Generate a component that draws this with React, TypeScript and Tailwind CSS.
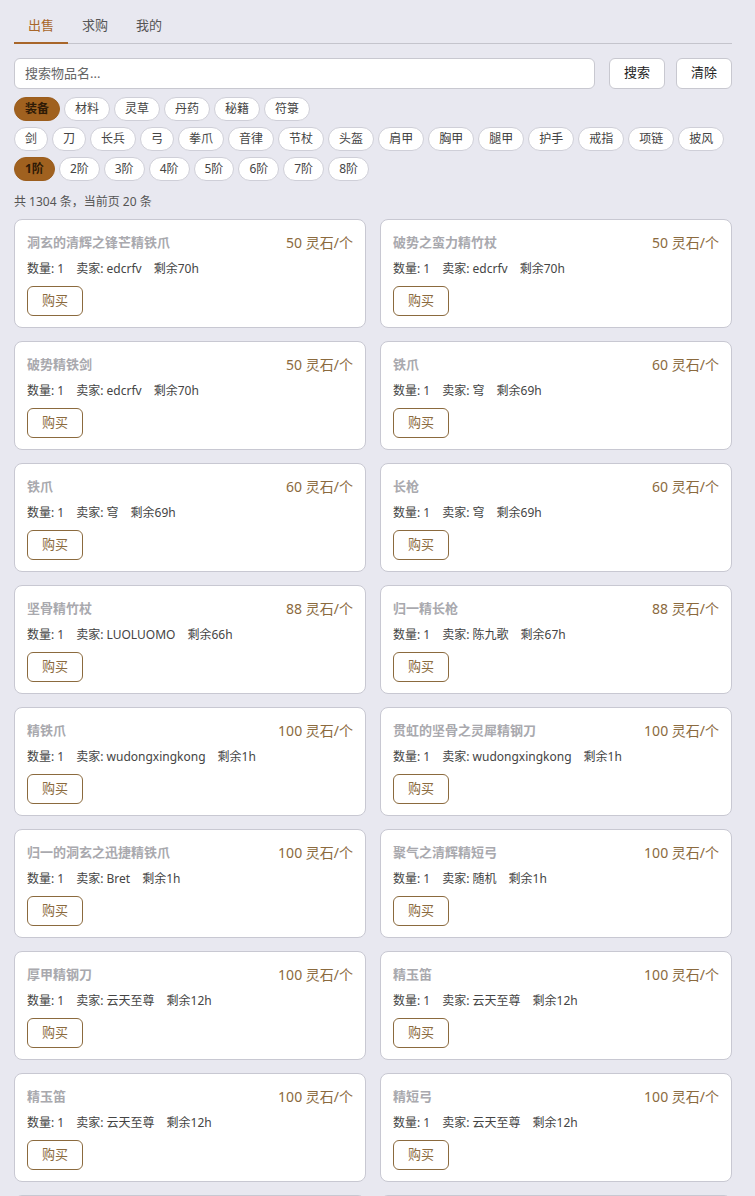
import { useState } from 'react';

const tabs = ['出售', '求购', '我的'];
const kinds = ['装备', '材料', '灵草', '丹药', '秘籍', '符箓'];
const slots = ['剑', '刀', '长兵', '弓', '拳爪', '音律', '节杖', '头盔', '肩甲', '胸甲', '腿甲', '护手', '戒指', '项链', '披风'];
const tiers = ['1阶', '2阶', '3阶', '4阶', '5阶', '6阶', '7阶', '8阶'];

const listings = [
  ['洞玄的清辉之锋芒精铁爪', 50, 'edcrfv', '70h'],
  ['破势之蛮力精竹杖', 50, 'edcrfv', '70h'],
  ['破势精铁剑', 50, 'edcrfv', '70h'],
  ['铁爪', 60, '穹', '69h'],
  ['铁爪', 60, '穹', '69h'],
  ['长枪', 60, '穹', '69h'],
  ['坚骨精竹杖', 88, 'LUOLUOMO', '66h'],
  ['归一精长枪', 88, '陈九歌', '67h'],
  ['精铁爪', 100, 'wudongxingkong', '1h'],
  ['贯虹的坚骨之灵犀精钢刀', 100, 'wudongxingkong', '1h'],
  ['归一的洞玄之迅捷精铁爪', 100, 'Bret', '1h'],
  ['聚气之清辉精短弓', 100, '随机', '1h'],
  ['厚甲精钢刀', 100, '云天至尊', '12h'],
  ['精玉笛', 100, '云天至尊', '12h'],
  ['精玉笛', 100, '云天至尊', '12h'],
  ['精短弓', 100, '云天至尊', '12h'],
  ['精铁剑', 100, '云天至尊', '12h'],
  ['精钢刀', 100, '云天至尊', '12h'],
  ['精竹杖', 120, '随机', '20h'],
  ['精长枪', 120, '随机', '20h'],
] as const;

function Chip({ label, active }: { label: string; active?: boolean }) {
  return (
    <button
      className={
        active
          ? 'h-[24px] rounded-full border border-[#9c5e1e] bg-[#a0611f] px-[10px] text-[12px] font-bold leading-none text-[#2e1a06]'
          : 'h-[24px] rounded-full border border-[#cfcfd8] bg-white px-[10px] text-[12px] leading-none text-[#444]'
      }
    >
      {label}
    </button>
  );
}

export default function App() {
  const [tab] = useState(0);
  return (
    <div
      className="min-h-screen bg-[#e8e8f0] pl-[14px] pr-[23px] pt-[14px] pb-6 text-[#333]"
      style={{ fontFamily: '"Noto Sans", "Noto Sans CJK SC", sans-serif' }}
    >
      <div className="flex border-b border-[#c4c4cc]">
        {tabs.map((t, i) => (
          <div
            key={t}
            className={
              i === tab
                ? '-mb-px w-[54px] border-b-2 border-[#a8662a] pb-[6px] pt-[2px] text-center text-[13px] text-[#a8662a]'
                : '-mb-px w-[54px] pb-[6px] pt-[2px] text-center text-[13px] text-[#555]'
            }
          >
            {t}
          </div>
        ))}
      </div>

      <div className="mt-[14px] flex items-center">
        <input
          placeholder="搜索物品名..."
          className="h-[31px] flex-1 rounded-[6px] border border-[#c8c8d0] bg-white px-[10px] text-[13px] text-[#333] outline-none placeholder:text-[#666]"
        />
        <button className="ml-[14px] h-[31px] w-[56px] rounded-[6px] border border-[#c8c8d0] bg-white text-[13px] text-[#222]">
          搜索
        </button>
        <button className="ml-[11px] h-[31px] w-[56px] rounded-[6px] border border-[#c8c8d0] bg-white text-[13px] text-[#222]">
          清除
        </button>
      </div>

      <div className="mt-[8px] flex flex-wrap gap-[4px]">
        {kinds.map((k, i) => (
          <Chip key={k} label={k} active={i === 0} />
        ))}
      </div>
      <div className="mt-[6px] flex flex-wrap gap-[4px]">
        {slots.map((k) => (
          <Chip key={k} label={k} />
        ))}
      </div>
      <div className="mt-[6px] flex flex-wrap gap-[4px]">
        {tiers.map((k, i) => (
          <Chip key={k} label={k} active={i === 0} />
        ))}
      </div>

      <div className="mt-[12px] text-[12px] text-[#555]">共 1304 条，当前页 20 条</div>

      <div className="mt-[8px] grid grid-cols-2 gap-x-[14px] gap-y-[13px]">
        {listings.map(([name, price, seller, left], i) => (
          <div key={i} className="rounded-[8px] border border-[#c8c8d2] bg-white px-[12px] pb-[11px] pt-[13px]">
            <div className="flex h-[20px] items-center justify-between">
              <span className="text-[13px] font-bold text-[#a9a9ae]">{name}</span>
              <span className="text-[14px] text-[#8b6a3e]">{price} 灵石/个</span>
            </div>
            <div className="mt-[8px] flex gap-[12px] text-[12px] leading-[16px] text-[#444]">
              <span>数量: 1</span>
              <span>卖家: {seller}</span>
              <span>剩余{left}</span>
            </div>
            <button className="mt-[9px] h-[30px] w-[56px] rounded-[6px] border border-[#8b6a3e] bg-white text-[13px] text-[#8b6a3e]">
              购买
            </button>
          </div>
        ))}
      </div>
    </div>
  );
}
